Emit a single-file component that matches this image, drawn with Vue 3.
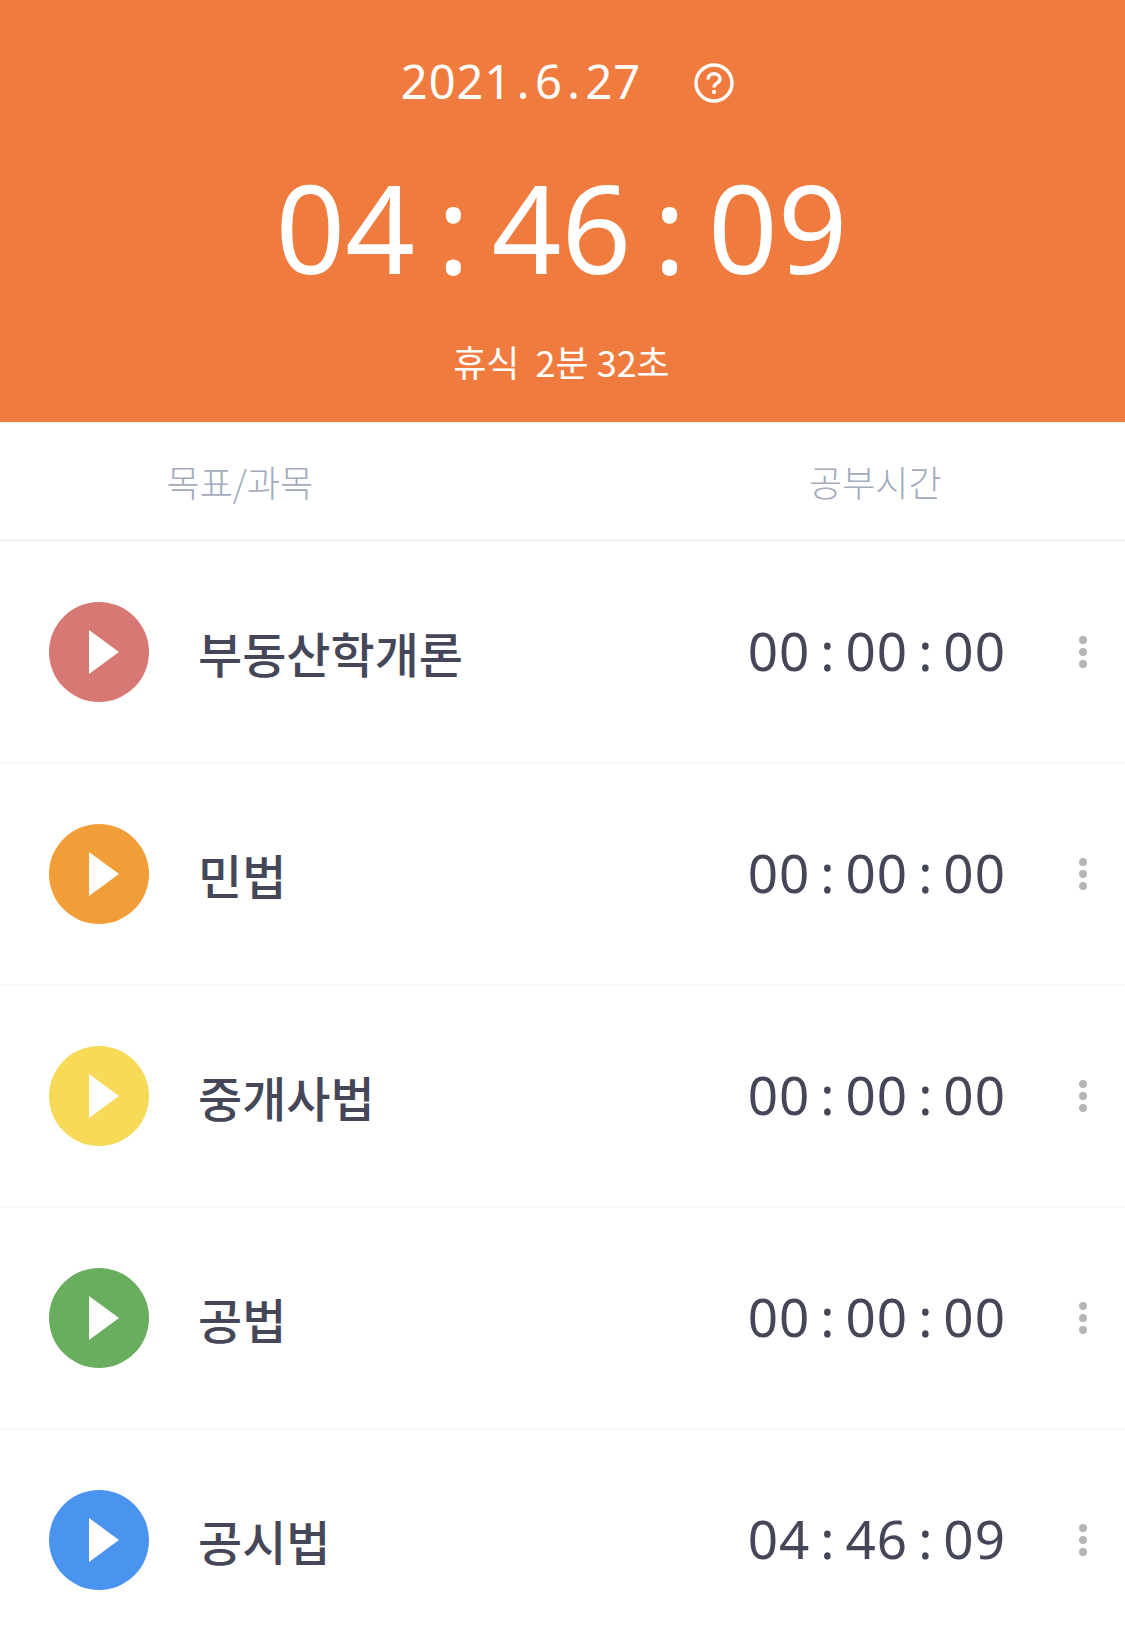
<template>
  <div class="page">
    <header class="head">
      <div class="date-row">
        <span class="date">2021<span class="dot">.</span>6<span class="dot">.</span>27</span>
        <svg class="help" width="40" height="40" viewBox="0 0 40 40" fill="none" stroke="#fff">
          <circle cx="20" cy="20" r="18" stroke-width="3.400" />
          <path d="M14 16.500c0-3.600 2.700-5.800 6-5.800s6 2.200 6 5.200c0 4.300-6 4.200-6 8.600" stroke-width="3.400" />
          <rect x="18.200" y="27" width="3.600" height="3.800" fill="#fff" stroke="none" />
        </svg>
      </div>
      <div class="clock">
        <span class="num">04</span><span class="sep">:</span><span class="num">46</span><span class="sep">:</span><span class="num">09</span>
      </div>
      <div class="rest"><span class="rest-label">휴식</span>2분 32초</div>
    </header>

    <div class="labels">
      <span class="label-goal">목표/과목</span>
      <span class="label-time">공부시간</span>
    </div>

    <ul class="list">
      <li v-for="item in items" :key="item.name" class="row">
        <button class="play" :style="{ background: item.color }">
          <svg width="32" height="46" viewBox="0 0 32 46"><path d="M1 1 31 23 1 45z" fill="#fff" /></svg>
        </button>
        <span class="name">{{ item.name }}</span>
        <span class="time">
          <template v-for="(part, i) in item.time" :key="i"><span v-if="i" class="colon">:</span>{{ part }}</template>
        </span>
        <span class="more"><i></i><i></i><i></i></span>
      </li>
    </ul>
  </div>
</template>

<script setup>
const items = [
  { name: "부동산학개론", color: "#d77875", time: ["00", "00", "00"] },
  { name: "민법", color: "#f19e38", time: ["00", "00", "00"] },
  { name: "중개사법", color: "#f6da58", time: ["00", "00", "00"] },
  { name: "공법", color: "#69ae5e", time: ["00", "00", "00"] },
  { name: "공시법", color: "#4a93ee", time: ["04", "46", "09"] },
];
</script>

<style scoped>
.page { width: 1125px; height: 1645px; overflow: hidden; background: #fff; font-family: "Noto Sans", "Noto Sans CJK KR", sans-serif; }
.head { height: 422px; background: #ef7c3e; color: #fff; display: flex; flex-direction: column; align-items: center; }
.date-row { height: 162px; display: flex; align-items: center; padding-left: 10px; }
.date { font-size: 47px; letter-spacing: 1px; }
.dot { margin: 0 4.500px; }
.help { margin-left: 53px; margin-top: 4px; }
.clock { height: 120px; margin: 5px 2px 0 0; display: flex; align-items: center; font-size: 122px; line-height: 1; }
.sep { margin: 0 22px; }
.rest { margin: 49px 2px 0 0; font-size: 36px; line-height: 50px; font-family: "Noto Sans CJK KR", sans-serif; font-weight: 400; }
.rest-label { margin-right: 16px; }
.labels { height: 117px; border-bottom: 3px solid #f3f3f4; display: flex; align-items: center; color: #a3abbc; font-size: 36px; font-family: "Noto Sans CJK KR", sans-serif; font-weight: 300; }
.label-goal { width: 490px; text-align: center; }
.label-time { width: 510px; padding-left: 146px; text-align: center; }
.list { list-style: none; margin: 0; padding: 0; }
.row { height: 220px; border-bottom: 2px solid #f7f7f8; display: flex; align-items: center; padding-left: 49px; color: #454759; }
.play { width: 100px; height: 100px; border: 0; border-radius: 50%; padding: 0 0 0 10px; display: flex; align-items: center; justify-content: center; flex: none; }
.name { margin-left: 49px; font-size: 48px; font-weight: 500; font-family: "Noto Sans CJK KR", sans-serif; flex: 1; }
.time { font-size: 53px; letter-spacing: 1px; display: flex; align-items: center; position: relative; top: -2px; }
.colon { margin: 0 10px; }
.more { width: 8px; margin: 0 38px 0 73px; display: flex; flex-direction: column; gap: 4px; }
.more i { width: 8px; height: 8px; border-radius: 50%; background: #b5b5b5; }
</style>

<style>
body { background: #fff; }
</style>
